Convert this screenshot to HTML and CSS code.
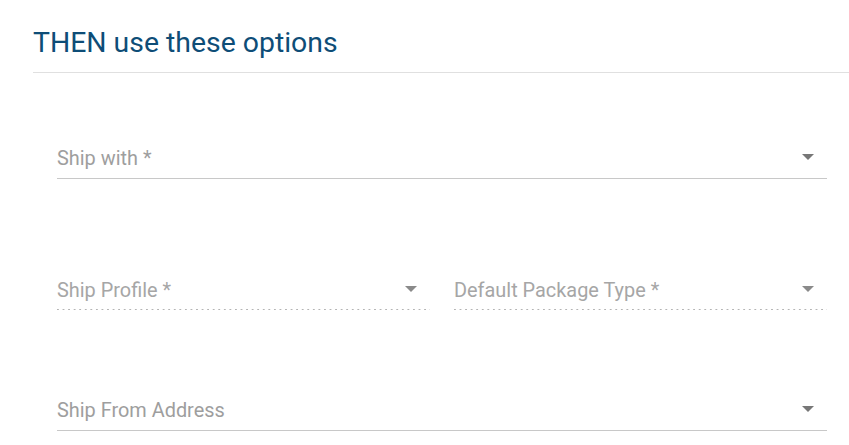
FILE: index.html
```html
<!DOCTYPE html>
<html lang="en">
<head>
<meta charset="utf-8">
<title>THEN use these options</title>
<link rel="stylesheet" href="styles.css">
</head>
<body>
  <section class="panel">
    <header class="panel-head">
      <h2 class="panel-title">THEN use these options</h2>
    </header>
    <div class="form">
      <div class="field field-first">
        <span class="field-label">Ship with *</span>
        <span class="arrow"></span>
      </div>
      <div class="row">
        <div class="field field-disabled">
          <span class="field-label">Ship Profile *</span>
          <span class="arrow"></span>
        </div>
        <div class="field field-disabled">
          <span class="field-label">Default Package Type *</span>
          <span class="arrow"></span>
        </div>
      </div>
      <div class="field field-last">
        <span class="field-label">Ship From Address</span>
        <span class="arrow"></span>
      </div>
    </div>
  </section>
</body>
</html>
```

FILE: styles.css
```css
html, body {
  margin: 0;
  padding: 0;
  background: #ffffff;
}

body {
  font-family: Roboto, "Liberation Sans", Arial, sans-serif;
  overflow: hidden;
}

.panel-head {
  margin-left: 33px;
  padding-top: 26px;
  padding-bottom: 13px;
  border-bottom: 1px solid #e0e0e0;
}

.panel-title {
  margin: 0;
  font-size: 28.4px;
  line-height: 33px;
  font-weight: 400;
  color: #0e4d77;
}

.form {
  padding: 0 22px 0 57px;
}

.field {
  display: flex;
  align-items: flex-start;
  padding-bottom: 9px;
  border-bottom: 1px solid #c8c8c8;
}

.field-label {
  flex: 1;
  font-size: 19.9px;
  line-height: 21px;
  color: #9e9e9e;
  white-space: nowrap;
}

.arrow {
  width: 0;
  height: 0;
  margin: 6px 13px 0 0;
  border-left: 6px solid transparent;
  border-right: 6px solid transparent;
  border-top: 6px solid #777777;
}

.field-first {
  margin-top: 75px;
}

.row {
  display: grid;
  grid-template-columns: 1fr 1fr;
  gap: 24px;
  margin-top: 101px;
}

.field-disabled {
  border-bottom: none;
  padding-bottom: 9px;
  background-image: linear-gradient(to right, #b4b4b4 0, #b4b4b4 1.5px, transparent 1.5px);
  background-size: 5.5px 1px;
  background-repeat: space no-repeat;
  background-position: left bottom;
}

.field-disabled .field-label {
  color: #a6a6a6;
}

.field-disabled .arrow {
  border-top-color: #8a8a8a;
}

.field-last {
  margin-top: 90px;
}
```
